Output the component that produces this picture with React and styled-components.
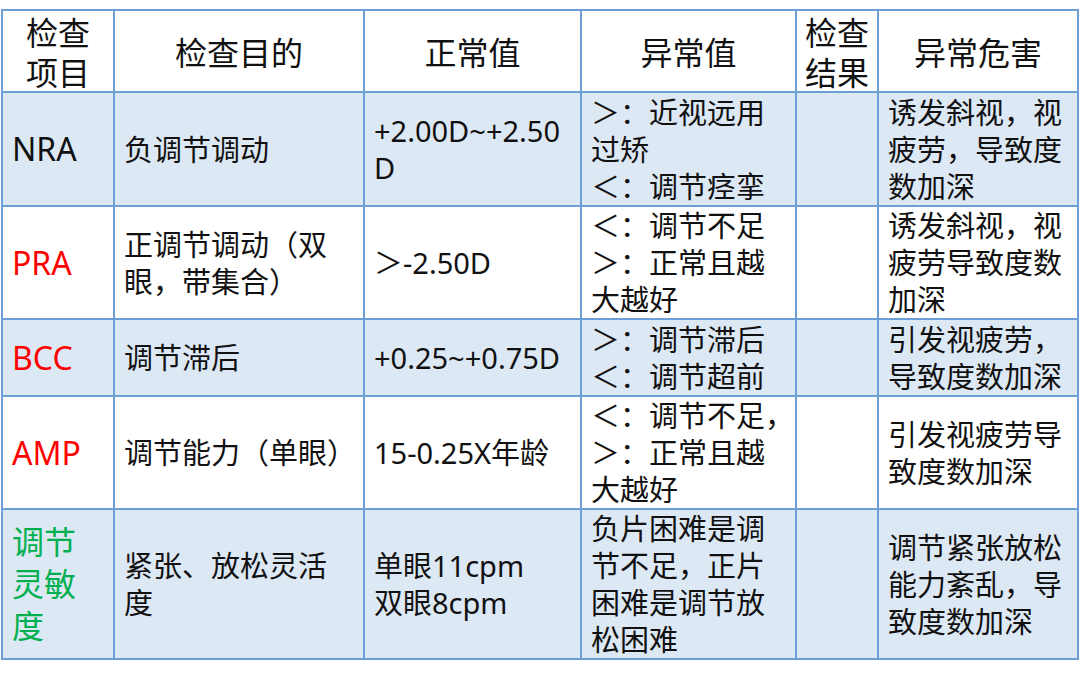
import styled, { createGlobalStyle } from "styled-components";

const GlobalStyle = createGlobalStyle`
  body {
    margin: 0;
    background: #ffffff;
    font-family: "Noto Sans", "Noto Sans CJK SC", sans-serif;
    color: #111111;
  }
`;

const Page = styled.div`
  padding: 9px 0 0 1px;
  width: 1080px;
  height: 677px;
  box-sizing: border-box;
`;

const Table = styled.table`
  border-collapse: collapse;
  table-layout: fixed;
  width: 1076px;
`;

const Col = styled.col`
  width: ${(p) => p.$w}px;
`;

const HeadCell = styled.th`
  border: 2px solid #6c9fd6;
  font-family: "Noto Sans CJK SC", sans-serif;
  font-weight: normal;
  font-size: 32px;
  line-height: 40px;
  text-align: center;
  vertical-align: middle;
  padding: 0;
  height: 79px;
  background: #ffffff;
`;

const Row = styled.tr`
  background: ${(p) => (p.$shaded ? "#dde8f5" : "#ffffff")};
`;

const Cell = styled.td`
  border: 2px solid #6c9fd6;
  font-size: 29px;
  line-height: 37px;
  padding: 0 4px 0 9px;
  vertical-align: middle;
  white-space: nowrap;
  height: ${(p) => p.$h}px;
`;

const Label = styled(Cell)`
  font-size: 32px;
  line-height: 42px;
  color: ${(p) => p.$color};
`;

const widths = [112, 250, 217, 215, 82, 200];

const header = [
  ["检查", "项目"],
  ["检查目的"],
  ["正常值"],
  ["异常值"],
  ["检查", "结果"],
  ["异常危害"],
];

const rows = [
  {
    h: 112,
    color: "#111111",
    label: ["NRA"],
    purpose: ["负调节调动"],
    normal: ["+2.00D~+2.50", "D"],
    abnormal: ["＞：近视远用", "过矫", "＜：调节痉挛"],
    harm: ["诱发斜视，视", "疲劳，导致度", "数加深"],
  },
  {
    h: 110,
    color: "#ff0000",
    label: ["PRA"],
    purpose: ["正调节调动（双", "眼，带集合）"],
    normal: ["＞-2.50D"],
    abnormal: ["＜：调节不足", "＞：正常且越", "大越好"],
    harm: ["诱发斜视，视", "疲劳导致度数", "加深"],
  },
  {
    h: 75,
    color: "#ff0000",
    label: ["BCC"],
    purpose: ["调节滞后"],
    normal: ["+0.25~+0.75D"],
    abnormal: ["＞：调节滞后", "＜：调节超前"],
    harm: ["引发视疲劳，", "导致度数加深"],
  },
  {
    h: 110,
    color: "#ff0000",
    label: ["AMP"],
    purpose: ["调节能力（单眼）"],
    normal: ["15-0.25X年龄"],
    abnormal: ["＜：调节不足，", "＞：正常且越", "大越好"],
    harm: ["引发视疲劳导", "致度数加深"],
  },
  {
    h: 148,
    color: "#00b050",
    label: ["调节", "灵敏", "度"],
    purpose: ["紧张、放松灵活", "度"],
    normal: ["单眼11cpm", "双眼8cpm"],
    abnormal: ["负片困难是调", "节不足，正片", "困难是调节放", "松困难"],
    harm: ["调节紧张放松", "能力紊乱，导", "致度数加深"],
  },
];

const Lines = ({ lines }) =>
  lines.map((l, i) => (
    <span key={i}>
      {i > 0 && <br />}
      {l}
    </span>
  ));

export default function App() {
  return (
    <>
      <GlobalStyle />
      <Page>
        <Table>
          <colgroup>
            {widths.map((w, i) => (
              <Col key={i} $w={w} />
            ))}
          </colgroup>
          <thead>
            <tr>
              {header.map((h, i) => (
                <HeadCell key={i}>
                  <Lines lines={h} />
                </HeadCell>
              ))}
            </tr>
          </thead>
          <tbody>
            {rows.map((r, i) => (
              <Row key={i} $shaded={i % 2 === 0}>
                <Label $h={r.h} $color={r.color}>
                  <Lines lines={r.label} />
                </Label>
                <Cell $h={r.h}>
                  <Lines lines={r.purpose} />
                </Cell>
                <Cell $h={r.h}>
                  <Lines lines={r.normal} />
                </Cell>
                <Cell $h={r.h}>
                  <Lines lines={r.abnormal} />
                </Cell>
                <Cell $h={r.h} />
                <Cell $h={r.h}>
                  <Lines lines={r.harm} />
                </Cell>
              </Row>
            ))}
          </tbody>
        </Table>
      </Page>
    </>
  );
}
